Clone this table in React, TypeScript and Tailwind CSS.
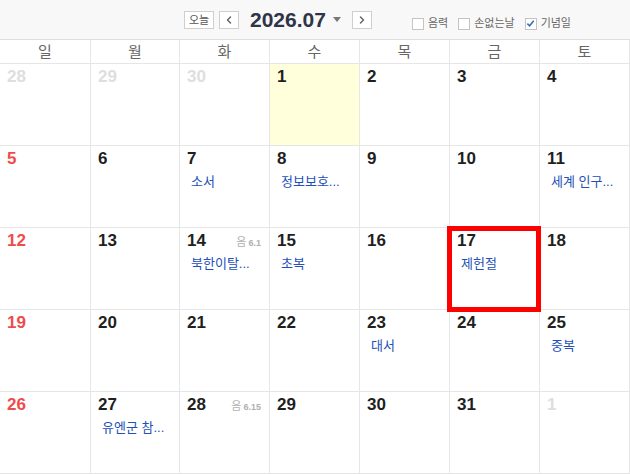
import { ChevronLeft, ChevronRight } from 'lucide-react'

type Day = {
  d: number
  muted?: boolean
  today?: boolean
  event?: string
  lunar?: [string, string]
  marked?: boolean
}

const WEEKDAYS = ['일', '월', '화', '수', '목', '금', '토']

const WEEKS: Day[][] = [
  [{ d: 28, muted: true }, { d: 29, muted: true }, { d: 30, muted: true }, { d: 1, today: true }, { d: 2 }, { d: 3 }, { d: 4 }],
  [{ d: 5 }, { d: 6 }, { d: 7, event: '소서' }, { d: 8, event: '정보보호...' }, { d: 9 }, { d: 10 }, { d: 11, event: '세계 인구...' }],
  [{ d: 12 }, { d: 13 }, { d: 14, lunar: ['음', '6.1'], event: '북한이탈...' }, { d: 15, event: '초복' }, { d: 16 }, { d: 17, event: '제헌절', marked: true }, { d: 18 }],
  [{ d: 19 }, { d: 20 }, { d: 21 }, { d: 22 }, { d: 23, event: '대서' }, { d: 24 }, { d: 25, event: '중복' }],
  [{ d: 26 }, { d: 27, event: '유엔군 참...' }, { d: 28, lunar: ['음', '6.15'] }, { d: 29 }, { d: 30 }, { d: 31 }, { d: 1, muted: true }],
]

const font = { fontFamily: '"Liberation Sans", "Noto Sans CJK KR", sans-serif' }

function Check({ label, checked }: { label: string; checked?: boolean }) {
  return (
    <label className="flex items-center gap-[4px] text-[11px] text-[#666]">
      <span className="flex h-[12px] w-[12px] items-center justify-center border border-[#c4c4c4] bg-white">
        {checked && (
          <svg viewBox="0 0 10 10" className="h-[9px] w-[9px]">
            <path d="M1.5 5.2 L4 7.6 L8.6 2" fill="none" stroke="#3b6fb6" strokeWidth="1.8" />
          </svg>
        )}
      </span>
      {label}
    </label>
  )
}

function Cell({ day, col }: { day: Day; col: number }) {
  const color = day.muted ? 'text-[#dedede]' : col === 0 ? 'text-[#f04b4b]' : 'text-[#1f1f1f]'
  return (
    <div
      className={`relative h-[82px] border-b border-[#e6e6e6] ${col > 0 ? 'border-l' : ''} ${col === 6 ? 'border-r' : ''} ${
        day.today ? 'bg-[#ffffdb]' : 'bg-white'
      }`}
    >
      <div className="flex items-start justify-between pl-[7px] pr-[8px] pt-[3px]">
        <span className={`text-[17px] font-bold leading-[20px] ${color}`}>{day.d}</span>
        {day.lunar && (
          <span className="mt-[5px] flex items-baseline gap-[2px] text-[#b0b0b0]">
            <span className="text-[11px] leading-[12px]">{day.lunar[0]}</span>
            <span className="text-[9px] font-bold leading-[12px]">{day.lunar[1]}</span>
          </span>
        )}
      </div>
      {day.event && (
        <div className="mt-[4px] pl-[11px] text-[13px] leading-[18px] text-[#2350b8]">{day.event}</div>
      )}
      {day.marked && (
        <div className="absolute -bottom-[3px] -left-[3px] -right-[2px] -top-[2px] z-10 border-[5px] border-[#ff0000]" />
      )}
    </div>
  )
}

export default function App() {
  return (
    <div className="h-[475px] w-[630px] overflow-hidden bg-white" style={font}>
      <div className="flex h-[40px] items-center border-b border-[#dddddd] bg-[#f8f8f8] pl-[184px] pr-[59px]">
        <button className="h-[18px] w-[30px] border border-[#cfcfcf] bg-white text-[11px] leading-[16px] text-[#555]">
          오늘
        </button>
        <button className="ml-[5px] flex h-[18px] w-[20px] items-center justify-center border border-[#cfcfcf] bg-white text-[#666]">
          <ChevronLeft className="h-[12px] w-[12px]" strokeWidth={3} />
        </button>
        <span className="ml-[11px] text-[21px] font-bold leading-[24px] text-[#2f3448]">2026.07</span>
        <svg viewBox="0 0 8 5" className="ml-[7px] h-[5px] w-[8px]">
          <path d="M0 0 H8 L4 5 Z" fill="#777" />
        </svg>
        <button className="ml-[11px] flex h-[18px] w-[20px] items-center justify-center border border-[#cfcfcf] bg-white text-[#666]">
          <ChevronRight className="h-[12px] w-[12px]" strokeWidth={3} />
        </button>
        <div className="ml-auto mt-[8px] flex items-center gap-[10px]">
          <Check label="음력" />
          <Check label="손없는날" />
          <Check label="기념일" checked />
        </div>
      </div>

      <div className="grid grid-cols-[90px_89px_90px_90px_90px_90px_91px]">
        {WEEKDAYS.map((w, i) => (
          <div
            key={w}
            className={`h-[24px] border-b border-[#e6e6e6] text-center text-[15px] leading-[23px] text-[#666] ${
              i > 0 ? 'border-l' : ''
            } ${i === 6 ? 'border-r' : ''}`}
          >
            {w}
          </div>
        ))}
        {WEEKS.map((week, r) => week.map((day, c) => <Cell key={`${r}-${c}`} day={day} col={c} />))}
      </div>
    </div>
  )
}
